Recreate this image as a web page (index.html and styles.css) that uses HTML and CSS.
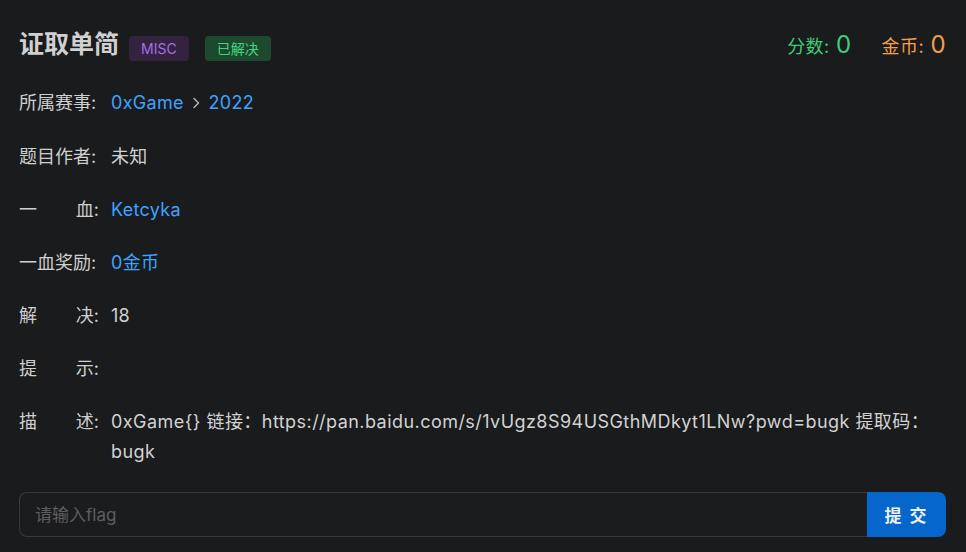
FILE: index.html
```html
<!DOCTYPE html>
<html lang="zh-CN">
<head>
<meta charset="utf-8">
<title>证取单简</title>
<link rel="stylesheet" href="styles.css">
</head>
<body>
<div class="page">
  <header class="head">
    <div class="head-left">
      <h1 class="title">证取单简</h1>
      <span class="tag tag-misc">MISC</span>
      <span class="tag tag-solved">已解决</span>
    </div>
    <div class="head-right">
      <span class="stat stat-score">分数: <b class="num">0</b></span>
      <span class="stat stat-gold">金币: <b class="num">0</b></span>
    </div>
  </header>

  <div class="rows">
    <div class="row">
      <div class="label"><span>所属赛事:</span></div>
      <div class="value link">0xGame <span class="chev"><svg width="10" height="14" viewBox="0 0 10 14"><path d="M3 2.5 L7.5 7 L3 11.5" fill="none" stroke="#b8b8b8" stroke-width="1.4" stroke-linecap="round" stroke-linejoin="round"/></svg></span> 2022</div>
    </div>
    <div class="row">
      <div class="label"><span>题目作者:</span></div>
      <div class="value">未知</div>
    </div>
    <div class="row">
      <div class="label"><span>一</span><span>血:</span></div>
      <div class="value link">Ketcyka</div>
    </div>
    <div class="row">
      <div class="label"><span>一血奖励:</span></div>
      <div class="value link">0金币</div>
    </div>
    <div class="row">
      <div class="label"><span>解</span><span>决:</span></div>
      <div class="value">18</div>
    </div>
    <div class="row">
      <div class="label"><span>提</span><span>示:</span></div>
      <div class="value"></div>
    </div>
    <div class="row row-desc">
      <div class="label"><span>描</span><span>述:</span></div>
      <div class="value desc">0xGame{} 链接：https://pan.baidu.com/s/1vUgz8S94USGthMDkyt1LNw?pwd=bugk 提取码：bugk</div>
    </div>
  </div>

  <form class="submit">
    <input class="flag-input" type="text" placeholder="请输入flag">
    <button class="btn" type="button">提 交</button>
  </form>
</div>
</body>
</html>
```

FILE: styles.css
```css
html, body {
  margin: 0;
  padding: 0;
  background: #1a1b1d;
}
body {
  font-family: Inter, "Noto Sans CJK SC", sans-serif;
  color: #d2d2d2;
  font-size: 18px;
}
.page {
  padding: 24px 20px 0 19px;
}
.head {
  display: flex;
  justify-content: space-between;
  align-items: baseline;
  height: 40px;
}
.head-left {
  display: flex;
  align-items: baseline;
  gap: 16px;
}
.title {
  margin: 0 -6px 0 0;
  font-size: 25px;
  font-weight: 700;
  line-height: 40px;
  color: #d0d0d0;
}
.tag {
  display: inline-block;
  font-size: 14px;
  line-height: 25px;
  height: 25px;
  padding: 0 12px;
  border-radius: 4px;
  position: relative;
  top: 1px;
}
.tag-misc {
  background: #33233f;
  color: #a86ce6;
}
.tag-solved {
  background: #1d4a2f;
  color: #44d47e;
}
.head-right {
  display: flex;
  align-items: baseline;
  gap: 30px;
}
.stat {
  font-size: 18px;
  letter-spacing: 0.4px;
}
.stat .num {
  font-size: 24px;
  font-weight: 400;
  margin-left: 1px;
}
.stat-score { color: #3ecf7c; }
.stat-gold { color: #f59e4b; }

.rows {
  margin-top: 25px;
  display: flex;
  flex-direction: column;
  gap: 25px;
}
.row {
  display: flex;
  line-height: 28px;
}
.row-desc {
  line-height: 30px;
  margin-top: -1px;
}
.label {
  flex: 0 0 80px;
  display: flex;
  justify-content: space-between;
  margin-right: 12px;
  color: #cfcfcf;
  white-space: nowrap;
}
.value {
  flex: 1;
  min-width: 0;
  color: #d2d2d2;
  letter-spacing: 0.3px;
}
.link {
  color: #3ea2ff;
}
.chev {
  display: inline-block;
  vertical-align: -1px;
  margin: 0 2px;
}
.desc {
  letter-spacing: 0.45px;
  overflow-wrap: anywhere;
}

.submit {
  display: flex;
  margin-top: 25px;
  height: 45px;
}
.flag-input {
  flex: 1;
  min-width: 0;
  box-sizing: border-box;
  height: 45px;
  margin: 0;
  padding: 0 15px;
  background: #1b1c1e;
  border: 1px solid #3b3b3e;
  border-right: none;
  border-radius: 8px 0 0 8px;
  color: #d2d2d2;
  font-family: Inter, "Noto Sans CJK SC", sans-serif;
  font-size: 17px;
  outline: none;
}
.flag-input::placeholder {
  color: #5e5e60;
}
.btn {
  flex: 0 0 79px;
  height: 45px;
  margin: 0;
  border: none;
  border-radius: 0 8px 8px 0;
  background: #0566cc;
  color: #f0f0f0;
  font-family: Inter, "Noto Sans CJK SC", sans-serif;
  font-size: 17px;
  font-weight: 700;
  letter-spacing: 2px;
  cursor: pointer;
}
```
